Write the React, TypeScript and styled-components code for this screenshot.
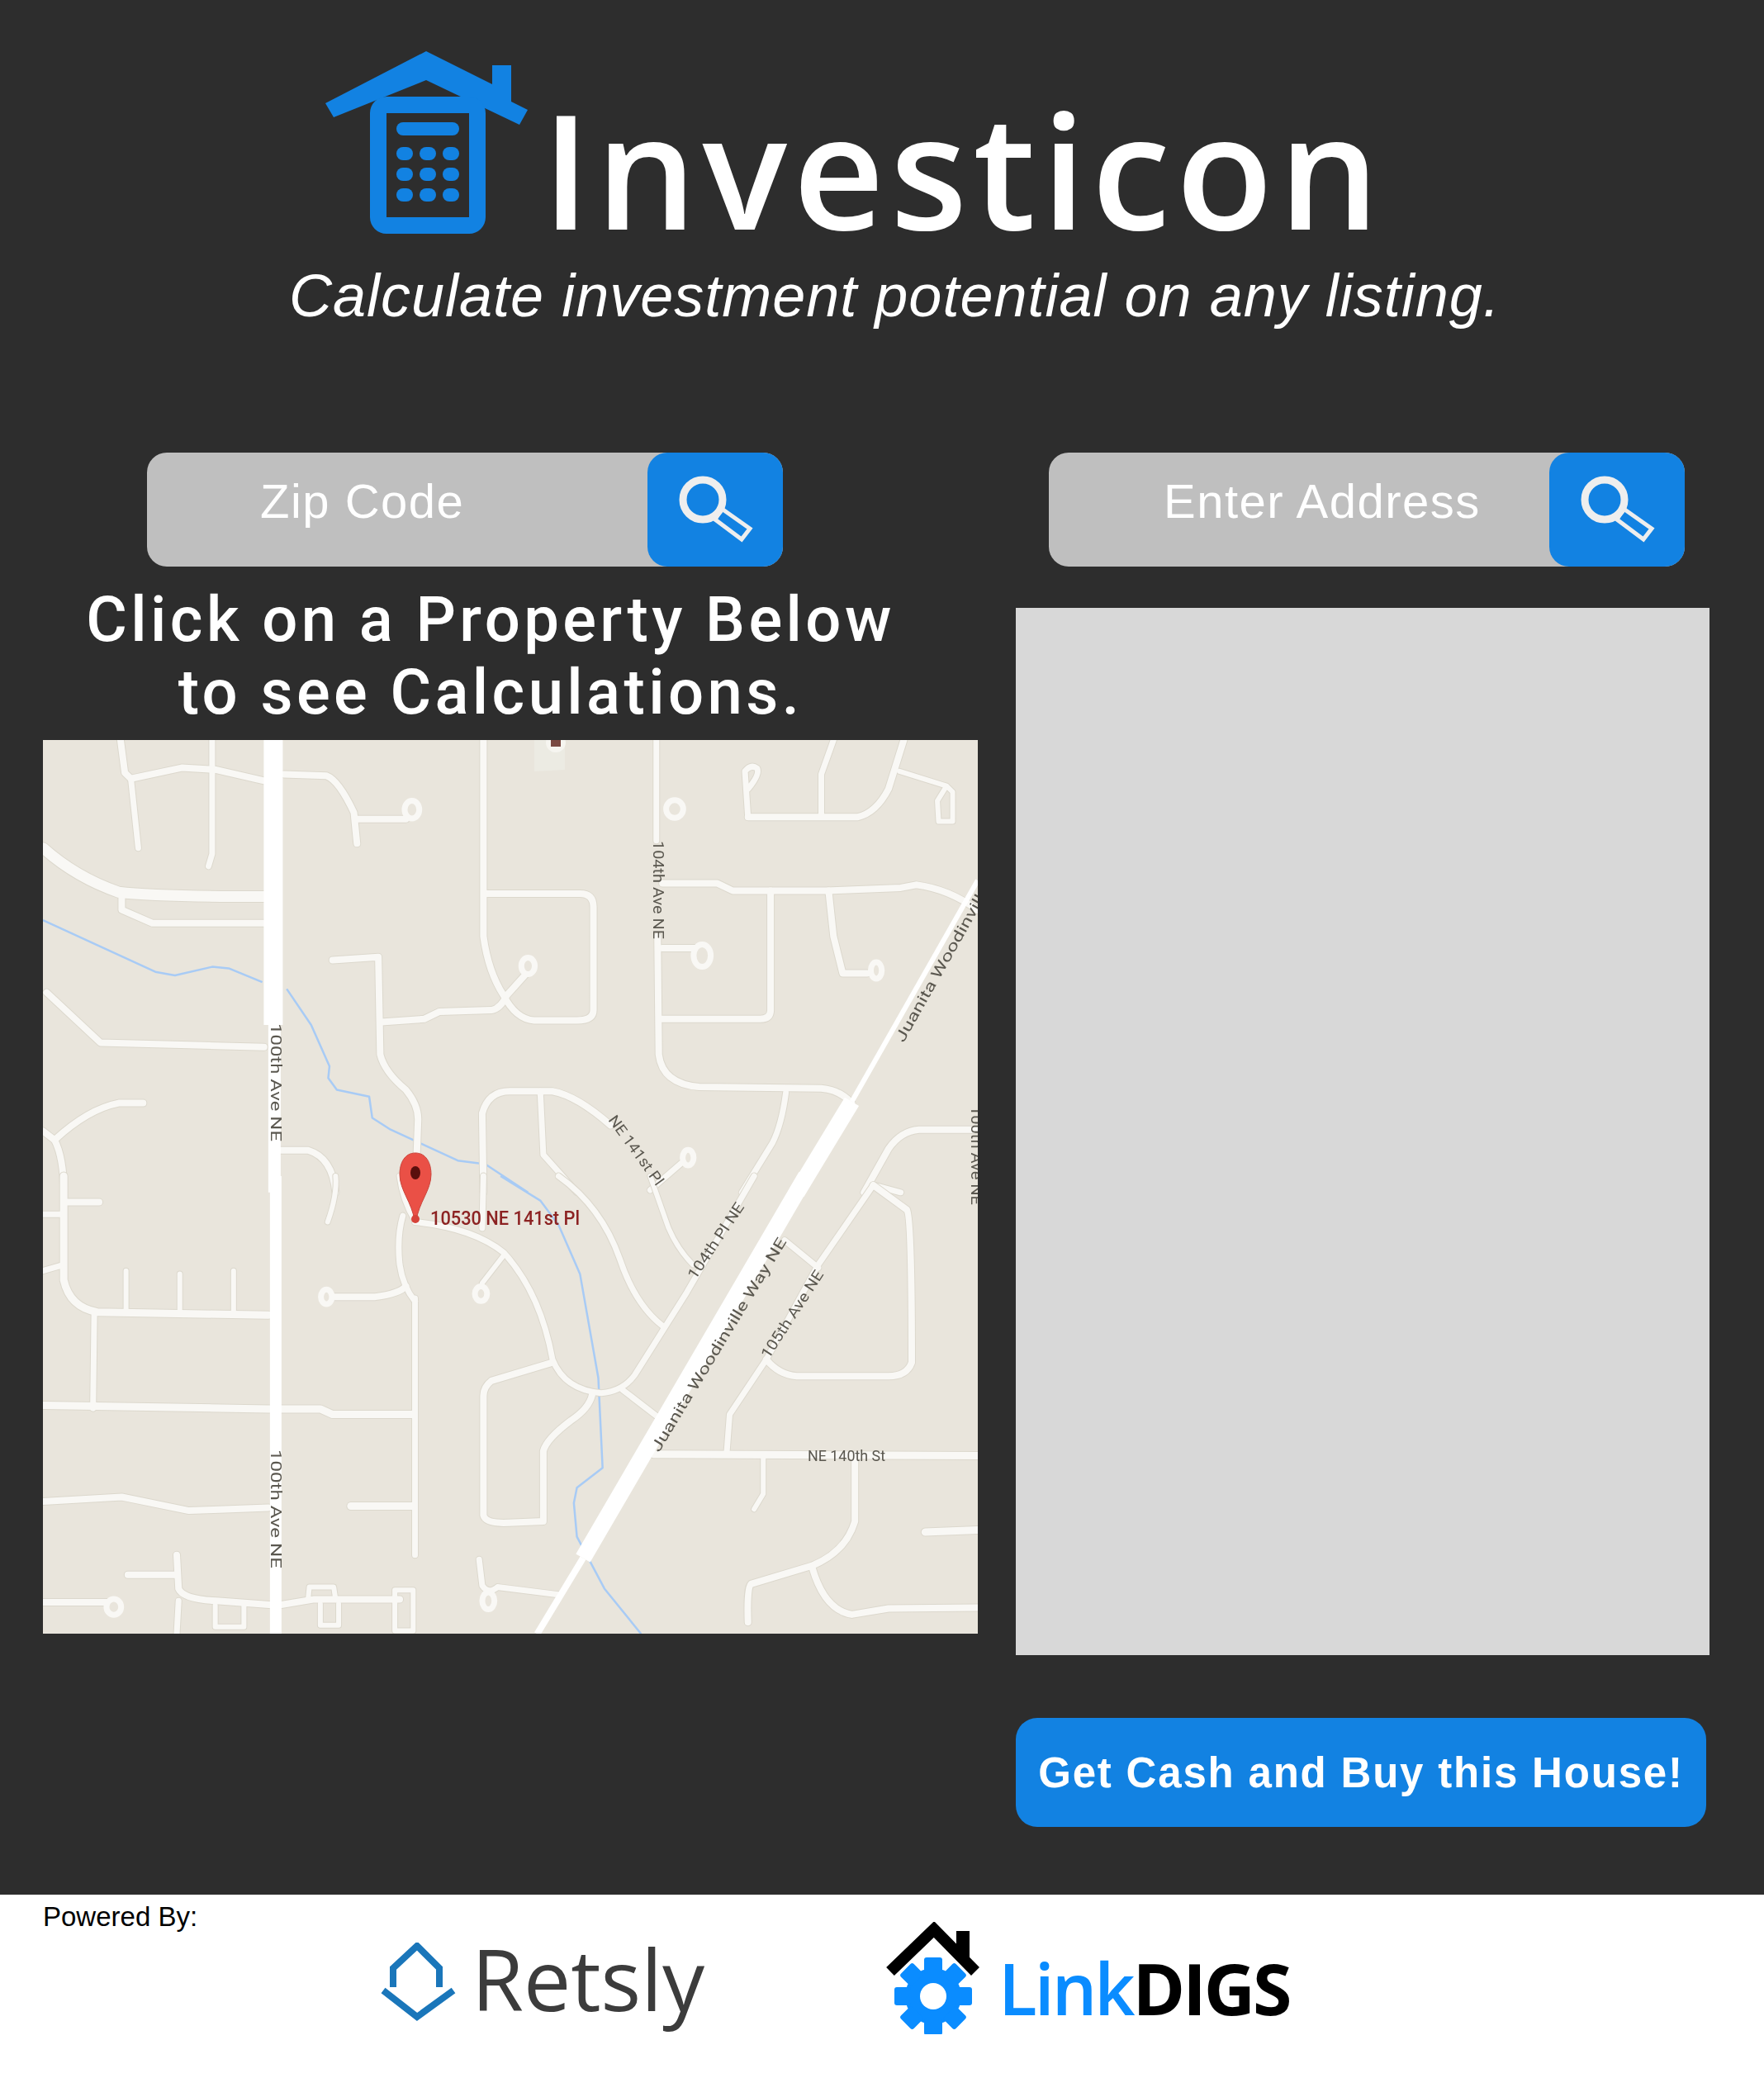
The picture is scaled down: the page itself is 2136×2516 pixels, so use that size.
import React from "react";
import styled, { createGlobalStyle } from "styled-components";

const GlobalStyle = createGlobalStyle`
  html, body {
    margin: 0;
    padding: 0;
    background: #2d2d2d;
  }
`;

const Page = styled.div`
  width: 2136px;
  height: 2516px;
  display: flex;
  flex-direction: column;
  font-family: "Liberation Sans", Arial, sans-serif;
`;

const Main = styled.main`
  height: 2294px;
  background: #2d2d2d;
  display: flex;
  flex-direction: column;
  flex-shrink: 0;
`;

const Brand = styled.div`
  display: flex;
  align-items: flex-start;
  padding: 62px 0 0 394px;
  height: 240px;
`;

const BrandMark = styled.svg`
  width: 246px;
  height: 222px;
  flex-shrink: 0;
`;

const Title = styled.h1`
  margin: 46px 0 0 16px;
  font-family: "Open Sans", sans-serif;
  font-size: 192px;
  line-height: 192px;
  font-weight: 600;
  letter-spacing: 7px;
  color: #ffffff;
`;

const Tagline = styled.p`
  margin: 14px 0 0 350px;
  font-size: 72px;
  line-height: 84px;
  font-style: italic;
  letter-spacing: 1px;
  color: #ffffff;
  white-space: nowrap;
`;

const Columns = styled.div`
  display: grid;
  grid-template-columns: 1132px 840px;
  column-gap: 46px;
  padding: 148px 0 0 52px;
`;

const Column = styled.div`
  display: flex;
  flex-direction: column;
  align-items: flex-start;
`;

const SearchBar = styled.div<{ $inset: number }>`
  width: 770px;
  height: 138px;
  margin-left: ${(p) => p.$inset}px;
  background: #bfbfbf;
  border-radius: 24px;
  display: flex;
  justify-content: space-between;
`;

const SearchLabel = styled.span<{ $pad: number }>`
  padding: 26px 0 0 ${(p) => p.$pad}px;
  font-size: 58px;
  line-height: 66px;
  letter-spacing: 1.5px;
  color: #ffffff;
`;

const SearchButton = styled.button`
  width: 164px;
  height: 138px;
  padding: 0;
  border: 0;
  border-radius: 24px;
  background: #1282e2;
  flex-shrink: 0;
`;

const SearchIcon = styled.svg`
  display: block;
  width: 164px;
  height: 138px;
`;

const Prompt = styled.h2`
  width: 1084px;
  margin: 20px 0 0 0;
  font-family: Roboto, sans-serif;
  font-size: 76px;
  line-height: 88px;
  font-weight: 500;
  letter-spacing: 4.4px;
  text-align: center;
  color: #ffffff;
`;

const MapFrame = styled.svg`
  display: block;
  width: 1132px;
  height: 1082px;
  margin-top: 14px;
  background: #e9e5dc;
`;

const Soft = styled.g`
  filter: blur(0.6px);
`;

const Road = styled.path<{ $w: number; $casing?: boolean }>`
  fill: none;
  stroke: ${(p) => (p.$casing ? "#dcd8cd" : "#f9f8f5")};
  stroke-width: ${(p) => (p.$casing ? p.$w + 2 : p.$w)}px;
  stroke-linecap: round;
  stroke-linejoin: round;
  vector-effect: non-scaling-stroke;
`;

const Highway = styled.path<{ $w: number }>`
  fill: none;
  stroke: #ffffff;
  stroke-width: ${(p) => p.$w}px;
  vector-effect: non-scaling-stroke;
`;

const Water = styled.path`
  fill: none;
  stroke: #a8cbf5;
  stroke-width: 2.5px;
  stroke-linejoin: round;
  vector-effect: non-scaling-stroke;
`;

const Loop = styled.ellipse`
  fill: #e9e5dc;
  stroke: #f9f8f5;
  stroke-width: 7px;
  vector-effect: non-scaling-stroke;
`;

const RoadLabel = styled.text`
  font-family: Roboto, sans-serif;
  font-size: 18px;
  fill: #5a574f;
`;

const PinLabel = styled.text`
  font-family: Roboto, sans-serif;
  font-size: 23px;
  font-weight: 500;
  fill: #8c2222;
`;

const DetailPanel = styled.div`
  width: 840px;
  height: 1268px;
  margin-top: 50px;
  background: #d8d8d8;
`;

const CashButton = styled.button`
  width: 836px;
  height: 132px;
  margin-top: 76px;
  padding: 0;
  border: 0;
  border-radius: 26px;
  background: #1282e2;
  font-family: "Liberation Sans", Arial, sans-serif;
  font-size: 51px;
  font-weight: 700;
  letter-spacing: 1.8px;
  color: #ffffff;
`;

const Footer = styled.footer`
  flex: 1;
  background: #ffffff;
  display: flex;
  align-items: flex-start;
  padding: 8px 0 0 52px;
`;

const Powered = styled.span`
  width: 409px;
  font-size: 33px;
  line-height: 38px;
  color: #000000;
  flex-shrink: 0;
`;

const Retsly = styled.div`
  display: flex;
  align-items: flex-start;
  gap: 16px;
  width: 612px;
  padding-top: 50px;
  flex-shrink: 0;
`;

const RetslyMark = styled.svg`
  width: 94px;
  height: 96px;
  flex-shrink: 0;
`;

const RetslyName = styled.span`
  font-family: "Open Sans", sans-serif;
  font-size: 102px;
  line-height: 96px;
  color: #3c3c3c;
  margin-top: -4px;
`;

const LinkDigs = styled.div`
  display: flex;
  align-items: flex-start;
  gap: 20px;
  padding-top: 25px;
`;

const LinkDigsMark = styled.svg`
  width: 116px;
  height: 136px;
  flex-shrink: 0;
`;

const LinkDigsName = styled.span`
  margin-top: 30px;
  font-family: "Open Sans", sans-serif;
  font-size: 86px;
  line-height: 100px;
  font-weight: 700;
  letter-spacing: -3px;
  color: #000000;
`;

const LinkPart = styled.span`
  color: #0a8cff;
  font-weight: 600;
`;

const UPPER_ROADS: [string, number][] = [
  ["M143 34 L150 145 L160 165 L243 128 L300 135 L378 172", 8],
  ["M160 165 L172 400", 7],
  ["M293 34 L293 420 L287 462", 7],
  ["M410 150 L480 155 Q500 170 525 280 L530 385", 8],
  ["M530 302 L610 302", 8],
  ["M737 34 L737 700 Q745 820 770 900 Q790 980 820 985 L890 985 Q917 985 917 950 L917 600 Q917 555 895 555 L737 555", 8],
  ["M570 990 L640 980 L665 955 L750 950 Q765 945 775 900 L812 815", 8],
  ["M490 780 L565 770 L568 1100 Q575 1160 610 1220 Q630 1270 630 1320 L628 1430", 8],
  ["M1020 34 L1020 375", 7],
  ["M1022 700 L1024 1100 Q1030 1200 1090 1210 L1290 1215 Q1320 1220 1340 1265", 8],
  ["M1030 520 L1120 520 L1145 545 L1300 545 L1420 535 L1445 525 Q1500 540 1545 610", 8],
  ["M1207 545 L1207 950 Q1207 980 1190 980 L1030 980", 8],
  ["M1302 545 L1310 700 L1325 825 L1365 825", 8],
  ["M1030 740 L1085 740", 8],
  ["M1310 34 L1290 150 L1290 295", 7],
  ["M1170 295 L1350 295 Q1380 280 1400 200 L1425 34", 8],
  ["M1170 295 L1165 140 Q1175 115 1185 130 Q1190 150 1170 200", 7],
  ["M1418 140 L1495 190 L1480 240 L1482 310 L1505 310 L1505 210 L1495 190", 6],
  ["M16 400 Q70 500 140 550 Q200 565 378 565", 13],
  ["M145 565 L145 610 L195 655 L378 655", 8],
  ["M22 890 L110 1060 L378 1075", 8],
  ["M180 1265 L140 1265 Q90 1285 35 1390 L16 1360", 8],
  ["M35 1390 Q50 1450 50 1568", 8],
  ["M405 1425 L450 1425 Q490 1450 495 1568", 8],
  ["M737 1568 L735 1300 Q745 1225 780 1225 L850 1225 Q890 1240 945 1340", 8],
  ["M830 1225 L835 1440 L890 1568", 7],
  ["M1232 1230 Q1225 1340 1210 1400 L1160 1568", 7],
  ["M1545 1355 L1450 1355 Q1420 1360 1400 1420 L1360 1568", 8],
  ["M1370 1540 L1420 1568", 7],
  ["M1060 1470 L1010 1560", 7],
];

const LOWER_ROADS: [string, number][] = [
  ["M50 0 L50 340 Q60 430 105 445 L385 455", 9],
  ["M16 310 L50 290", 7],
  ["M50 85 L108 85", 8],
  ["M16 125 L50 125", 7],
  ["M152 310 L152 435", 6],
  ["M240 320 L240 435", 6],
  ["M328 310 L328 440", 6],
  ["M100 450 L98 760", 7],
  ["M16 750 L385 762 L470 762 L490 780 L620 780", 9],
  ["M625 400 L625 1240", 7],
  ["M605 130 Q595 200 600 290 Q605 360 625 410", 7],
  ["M600 0 Q605 80 625 145", 7],
  ["M480 395 L560 395 Q600 385 610 360", 8],
  ["M495 0 Q498 60 482 150", 6],
  ["M625 150 Q720 170 770 250 Q830 380 850 600 Q870 700 930 710 Q965 705 985 650 L1070 380 L1180 0", 7],
  ["M770 260 L735 350", 6],
  ["M737 0 L735 170", 7],
  ["M850 610 L750 670 Q737 690 737 720 L737 1110 Q740 1135 770 1135 L835 1130 L835 900 Q840 860 880 800 Q910 760 915 715", 8],
  ["M965 700 L1030 800", 7],
  ["M860 0 Q930 100 960 270 Q985 420 1030 490", 7],
  ["M1010 0 L1040 170 Q1055 240 1080 290", 6],
  ["M1230 210 L1285 300", 7],
  ["M1375 30 L1285 290 L1200 600 L1140 780 L1135 910", 7],
  ["M1375 30 L1430 110 Q1438 130 1438 610 Q1430 655 1400 655 L1250 655 Q1220 650 1200 600", 8],
  ["M1015 910 L1546 915", 9],
  ["M1195 925 L1195 1040 L1180 1090", 6],
  ["M1345 920 L1345 1130 Q1330 1230 1275 1275 L1175 1335 Q1168 1345 1170 1460", 8],
  ["M1275 1280 Q1295 1420 1340 1435 L1400 1415 L1546 1412", 8],
  ["M1460 1165 L1546 1158", 9],
  ["M520 1080 L620 1080", 9],
  ["M16 1065 L145 1050 L255 1095 L385 1085", 8],
  ["M155 1305 L235 1305", 8],
  ["M235 1240 L238 1350 Q245 1385 300 1390 L400 1405 L460 1385 L600 1385", 8],
  ["M16 1395 L130 1395", 8],
  ["M238 1390 L235 1498", 7],
  ["M298 1405 L298 1475 L345 1475 L345 1405", 6],
  ["M450 1385 L452 1345 L492 1345 L495 1385", 6],
  ["M470 1400 L470 1470 L500 1470 L500 1400", 6],
  ["M592 1355 L622 1355 L622 1488 L592 1488 Z", 6],
  ["M730 1255 L735 1340 Q745 1370 760 1345 L860 1370", 7],
];

const UPPER_LOOPS = [
  [620, 270, 12, 30],
  [810, 800, 11, 28],
  [1050, 268, 14, 30],
  [1380, 815, 9, 28],
  [1095, 765, 14, 38],
  [1072, 1450, 9, 26],
];

const LOWER_LOOPS = [
  [480, 395, 9, 24],
  [733, 385, 10, 24],
  [132, 1410, 12, 26],
  [745, 1390, 10, 28],
];

const renderRoads = (roads: [string, number][]) => (
  <>
    {roads.map(([d, w]) => (
      <Road key={`c${d}`} d={d} $w={w} $casing />
    ))}
    {roads.map(([d, w]) => (
      <Road key={d} d={d} $w={w} />
    ))}
  </>
);

function PropertyMap() {
  return (
    <MapFrame viewBox="0 0 1132 1082">
      <Soft>
        {/* upper half traced at 0.74 x 0.357, lower half at 0.74 x 0.37 */}
        <g transform="translate(-11.84 -12.14) scale(0.7398 0.3571)">
          <Water d="M16 645 L200 820 L232 832 L293 803 L320 808 L375 855" />
          <Water d="M415 878 L455 1000 L485 1140 L483 1180 L497 1220 L550 1243 L555 1315 L585 1355 L695 1460 L740 1472 L810 1568" />
          {renderRoads(UPPER_ROADS)}
          {UPPER_LOOPS.map(([cx, cy, rx, ry]) => (
            <Loop key={`${cx}-${cy}`} cx={cx} cy={cy} rx={rx} ry={ry} />
          ))}
          <Highway d="M393 34 L393 1000" $w={23} />
          <Highway d="M395 1000 L395 1568" $w={15} />
          <Highway d="M1546 510 L1340 1260" $w={6} />
          <Highway d="M1340 1260 L1250 1568" $w={20} />
        </g>
        <g transform="translate(-11.84 528) scale(0.7398 0.36996)">
          <Water d="M765 0 L830 80 L860 160 L895 320 L925 660 L932 955 L890 1020 L885 1070 L890 1180 L935 1350 L995 1498" />
          {renderRoads(LOWER_ROADS)}
          {LOWER_LOOPS.map(([cx, cy, rx, ry]) => (
            <Loop key={`${cx}-${cy}`} cx={cx} cy={cy} rx={rx} ry={ry} />
          ))}
          <Highway d="M397 0 L397 1498" $w={14} />
          <Highway d="M1265 0 L900 1250" $w={20} />
          <Highway d="M900 1250 L825 1498" $w={8} />
        </g>
        <path d="M595 0 L632 0 L632 36 L595 38 Z" fill="#ecebe3" />
        <circle cx="621" cy="3" r="12" fill="#f6f5f0" />
        <path d="M615 0 h12 v8 h-12 Z" fill="#7a4a42" />
        <RoadLabel transform="translate(276 343) rotate(90)" textLength={143} lengthAdjust="spacingAndGlyphs">
          100th Ave NE
        </RoadLabel>
        <RoadLabel transform="translate(276 859) rotate(90)" textLength={144} lengthAdjust="spacingAndGlyphs">
          100th Ave NE
        </RoadLabel>
        <RoadLabel transform="translate(739 122) rotate(90)" textLength={119} lengthAdjust="spacingAndGlyphs">
          104th Ave NE
        </RoadLabel>
        <RoadLabel transform="translate(1124 443) rotate(90)" textLength={120} lengthAdjust="spacingAndGlyphs">
          100th Ave NE
        </RoadLabel>
        <RoadLabel transform="translate(1042 367) rotate(-60.6)" textLength={215} lengthAdjust="spacingAndGlyphs">
          Juanita Woodinville
        </RoadLabel>
        <RoadLabel transform="translate(746 863) rotate(-58.8)" textLength={299} lengthAdjust="spacingAndGlyphs">
          Juanita Woodinville Way NE
        </RoadLabel>
        <RoadLabel transform="translate(879 750) rotate(-57)" textLength={123} lengthAdjust="spacingAndGlyphs">
          105th Ave NE
        </RoadLabel>
        <RoadLabel transform="translate(790 654) rotate(-56)" textLength={107} lengthAdjust="spacingAndGlyphs">
          104th Pl NE
        </RoadLabel>
        <RoadLabel transform="translate(684 460) rotate(54)" textLength={100} lengthAdjust="spacingAndGlyphs">
          NE 141st Pl
        </RoadLabel>
        <RoadLabel x={926} y={873} textLength={94} lengthAdjust="spacingAndGlyphs">
          NE 140th St
        </RoadLabel>
        <path
          d="M451 500 C438 500 432 512 432 526 C432 545 447 560 450 582 L452 582 C455 560 470 545 470 526 C470 512 464 500 451 500 Z"
          fill="#ea5046"
          stroke="#c9453c"
          strokeWidth="1"
        />
        <ellipse cx="451" cy="524" rx="6" ry="8" fill="#5a0f0d" />
        <circle cx="451" cy="580" r="5" fill="#d6433a" />
        <PinLabel x={469} y={587} textLength={181} lengthAdjust="spacingAndGlyphs">
          10530 NE 141st Pl
        </PinLabel>
      </Soft>
    </MapFrame>
  );
}

function MagnifierIcon() {
  return (
    <SearchIcon viewBox="0 0 164 138">
      <ellipse cx="67" cy="57" rx="24" ry="24" fill="none" stroke="#eeeeee" strokeWidth="9" />
      <path d="M90 68 L124 92 L114 105 L82 81 Z" fill="none" stroke="#eeeeee" strokeWidth="5" />
    </SearchIcon>
  );
}

const KEY_ROWS = [128, 153, 178];
const KEY_COLS = [86, 114, 142];

function InvesticonMark() {
  return (
    <BrandMark viewBox="0 0 246 222">
      <path
        d="M0 63 L122 0 L202 40 L202 17 L225 17 L225 61 L245 71 L235 89 L122 35 L10 80 Z"
        fill="#1282e2"
      />
      <path
        fillRule="evenodd"
        d="M74 55 H174 A20 20 0 0 1 194 75 V201 A20 20 0 0 1 174 221 H74 A20 20 0 0 1 54 201 V75 A20 20 0 0 1 74 55 Z M74 75 V201 H174 V75 Z"
        fill="#1282e2"
      />
      <rect x="86" y="86" width="76" height="16" rx="8" fill="#1282e2" />
      {KEY_ROWS.map((y) =>
        KEY_COLS.map((x) => (
          <rect key={`${x}-${y}`} x={x} y={y - 12} width="20" height="16" rx="8" fill="#1282e2" />
        ))
      )}
    </BrandMark>
  );
}

function RetslyIcon() {
  return (
    <RetslyMark viewBox="0 0 94 96">
      <path
        d="M15 54 V31 L44 4 L71 31 V54 M3 58 L44 90 L88 58"
        fill="none"
        stroke="#1a76ba"
        strokeWidth="8"
      />
    </RetslyMark>
  );
}

const GEAR_TEETH = [0, 45, 90, 135, 180, 225, 270, 315];

function LinkDigsIcon() {
  return (
    <LinkDigsMark viewBox="0 0 116 136">
      <g fill="#0a8cff">
        <circle cx="57" cy="90" r="34" />
        {GEAR_TEETH.map((a) => (
          <rect key={a} x="46" y="43" width="22" height="20" rx="3" transform={`rotate(${a} 57 90)`} />
        ))}
      </g>
      <circle cx="57" cy="90" r="16" fill="#ffffff" />
      <path d="M5 60 L58 9 L108 60" fill="none" stroke="#000000" strokeWidth="14" strokeLinejoin="miter" />
      <rect x="85" y="11" width="16" height="32" fill="#000000" />
    </LinkDigsMark>
  );
}

export default function App() {
  return (
    <>
      <GlobalStyle />
      <Page>
        <Main>
          <Brand>
            <InvesticonMark />
            <Title>Investicon</Title>
          </Brand>
          <Tagline>Calculate investment potential on any listing.</Tagline>
          <Columns>
            <Column>
              <SearchBar $inset={126}>
                <SearchLabel $pad={137}>Zip Code</SearchLabel>
                <SearchButton>
                  <MagnifierIcon />
                </SearchButton>
              </SearchBar>
              <Prompt>
                Click on a Property Below
                <br />
                to see Calculations.
              </Prompt>
              <PropertyMap />
            </Column>
            <Column>
              <SearchBar $inset={40}>
                <SearchLabel $pad={139}>Enter Address</SearchLabel>
                <SearchButton>
                  <MagnifierIcon />
                </SearchButton>
              </SearchBar>
              <DetailPanel />
              <CashButton>Get Cash and Buy this House!</CashButton>
            </Column>
          </Columns>
        </Main>
        <Footer>
          <Powered>Powered By:</Powered>
          <Retsly>
            <RetslyIcon />
            <RetslyName>Retsly</RetslyName>
          </Retsly>
          <LinkDigs>
            <LinkDigsIcon />
            <LinkDigsName>
              <LinkPart>Link</LinkPart>DIGS
            </LinkDigsName>
          </LinkDigs>
        </Footer>
      </Page>
    </>
  );
}
